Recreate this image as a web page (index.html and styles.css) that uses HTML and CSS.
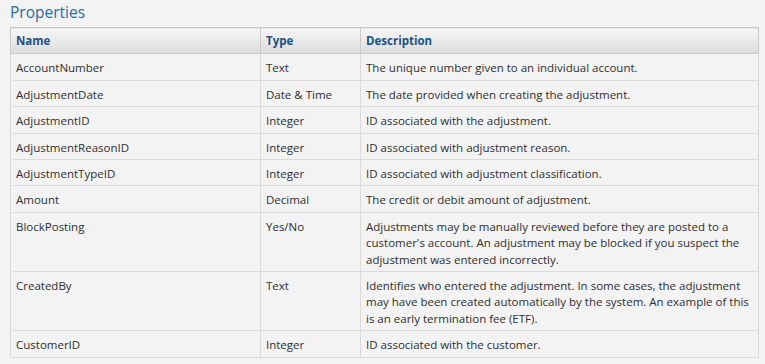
FILE: index.html
```html
<!DOCTYPE html>
<html lang="en">
<head>
    <meta charset="UTF-8">
    <title>Properties</title>
    <link rel="stylesheet" href="styles.css">
</head>
<body>
    <div class="props">
        <h2 class="props-title">Properties</h2>
        <table class="props-table">
            <thead>
                <tr>
                    <th class="col-name">Name</th>
                    <th class="col-type">Type</th>
                    <th>Description</th>
                </tr>
            </thead>
            <tbody>
                <tr><td>AccountNumber</td><td>Text</td><td>The unique number given to an individual account.</td></tr>
                <tr><td>AdjustmentDate</td><td>Date &amp; Time</td><td>The date provided when creating the adjustment.</td></tr>
                <tr><td>AdjustmentID</td><td>Integer</td><td>ID associated with the adjustment.</td></tr>
                <tr><td>AdjustmentReasonID</td><td>Integer</td><td>ID associated with adjustment reason.</td></tr>
                <tr><td>AdjustmentTypeID</td><td>Integer</td><td>ID associated with adjustment classification.</td></tr>
                <tr><td>Amount</td><td>Decimal</td><td>The credit or debit amount of adjustment.</td></tr>
                <tr><td>BlockPosting</td><td>Yes/No</td><td>Adjustments may be manually reviewed before they are posted to a customer's account. An adjustment may be blocked if you suspect the adjustment was entered incorrectly.</td></tr>
                <tr><td>CreatedBy</td><td>Text</td><td>Identifies who entered the adjustment. In some cases, the adjustment may have been created automatically by the system. An example of this is an early termination fee (ETF).</td></tr>
                <tr><td>CustomerID</td><td>Integer</td><td>ID associated with the customer.</td></tr>
            </tbody>
        </table>
    </div>
</body>
</html>
```

FILE: styles.css
```css
body {
    margin: 0;
    background-color: #f3f3f3;
    font-family: 'Open Sans', 'Noto Sans', sans-serif;
    color: #2f2f2f;
}
.props {
    padding: 0 6px 0 10px;
}
.props-title {
    margin: 0;
    padding-top: 1px;
    height: 26px;
    font-size: 15.5px;
    font-weight: normal;
    color: #2b6aa6;
    line-height: 22px;
}
.props-table {
    width: 100%;
    border-collapse: collapse;
    font-size: 11.5px;
    line-height: 16.4px;
}
.props-table th {
    text-align: left;
    padding: 5px 5px 4px 5px;
    height: 16px;
    color: #1b5186;
    font-weight: bold;
    background: linear-gradient(#f6f6f6, #dcdcdc);
    border: 1px solid #c8c8c8;
}
.props-table td {
    vertical-align: top;
    padding: 6px 5px 3px 5px;
    border: 1px solid #dadada;
}
.col-name {
    width: 239px;
}
.col-type {
    width: 89px;
}
```
